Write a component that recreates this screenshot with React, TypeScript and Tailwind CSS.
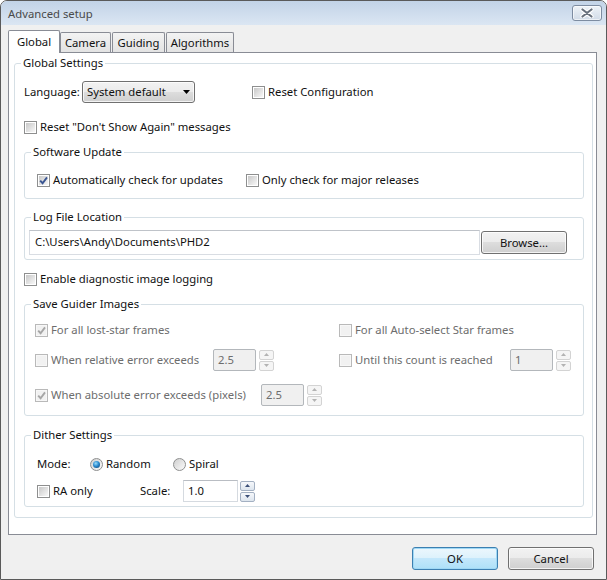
import React from "react";

type ChildrenProps = { children?: React.ReactNode; className?: string };

function Check({ checked = false, disabled = false }: { checked?: boolean; disabled?: boolean }) {
  return (
    <span
      className={`relative flex h-[13px] w-[13px] shrink-0 items-center justify-center border ${
        disabled ? "border-[#b9b9b9] bg-[#f7f7f7]" : "border-[#8e8f8f] bg-white"
      }`}
    >
      <span
        className={`h-[9px] w-[9px] ${
          disabled ? "bg-[#f1f1f1]" : "bg-[linear-gradient(135deg,#c8c8c8,#f8f8f8)]"
        }`}
      />
      {checked && (
        <svg className="absolute left-[1px] top-[1px]" width="9" height="9" viewBox="0 0 9 9">
          <path
            d="M1.2 4.6 L3.6 7.2 L8 1.4"
            fill="none"
            stroke={disabled ? "#a6a6a6" : "#3a5693"}
            strokeWidth="1.9"
          />
        </svg>
      )}
    </span>
  );
}

function Radio({ selected = false }: { selected?: boolean }) {
  return (
    <span className="flex h-[13px] w-[13px] shrink-0 items-center justify-center rounded-full border border-[#8e8f8f] bg-[linear-gradient(135deg,#cfcfcf,#fbfbfb)]">
      {selected && (
        <span className="h-[7px] w-[7px] rounded-full bg-[radial-gradient(circle_at_40%_35%,#9adcf9_0%,#2b8bd0_45%,#0c3a66_100%)]" />
      )}
    </span>
  );
}

function CheckLabel({
  children,
  checked,
  disabled,
  className = "",
}: ChildrenProps & { checked?: boolean; disabled?: boolean }) {
  return (
    <div className={`flex items-center ${className}`}>
      <Check checked={checked} disabled={disabled} />
      <span className={`ml-[3px] whitespace-nowrap pb-[2px] ${disabled ? "text-[#6d6d6d]" : ""}`}>{children}</span>
    </div>
  );
}

function Spin({ disabled = false }: { disabled?: boolean }) {
  const box = disabled
    ? "border-[#d3d3d3] bg-[#f5f5f5]"
    : "border-[#a3b0c2] bg-[linear-gradient(#f6f8fb,#dde5ee)]";
  const fill = disabled ? "#b3b3b3" : "#3b4f78";
  return (
    <div className="flex w-[15px] shrink-0 flex-col gap-[1px]">
      <span className={`flex h-[10px] items-center justify-center rounded-[2px] border ${box}`}>
        <svg width="5" height="3" viewBox="0 0 5 3">
          <path d="M0 3 L2.5 0 L5 3Z" fill={fill} />
        </svg>
      </span>
      <span className={`flex h-[10px] items-center justify-center rounded-[2px] border ${box}`}>
        <svg width="5" height="3" viewBox="0 0 5 3">
          <path d="M0 0 L5 0 L2.5 3Z" fill={fill} />
        </svg>
      </span>
    </div>
  );
}

function Field({
  children,
  disabled = false,
  className = "",
}: ChildrenProps & { disabled?: boolean }) {
  return (
    <div
      className={`flex h-[22px] shrink-0 items-center border pb-[2px] pl-[4px] ${
        disabled
          ? "rounded-[2px] border-[#b3b7bb] bg-[#f0f0f0] text-[#6d6d6d]"
          : "border-[#d5dae0] border-t-[#b9bdc3] bg-white"
      } ${className}`}
    >
      {children}
    </div>
  );
}

function PushButton({ children, primary = false, className = "" }: ChildrenProps & { primary?: boolean }) {
  return (
    <div
      className={`flex h-[23px] w-[86px] items-center justify-center rounded-[3px] border pb-[1px] ${
        primary
          ? "border-[#3c7fb1] bg-[linear-gradient(#ecf7fd_0%,#dcf1fc_50%,#c3e7fb_50%,#ade0f8_100%)] shadow-[inset_0_0_0_1px_#9fd8f5]"
          : "border-[#707070] bg-[linear-gradient(#f2f2f2_0%,#ebebeb_50%,#dddddd_50%,#cfcfcf_100%)] shadow-[inset_0_0_0_1px_rgba(255,255,255,0.75)]"
      } ${className}`}
    >
      {children}
    </div>
  );
}

function Group({ title, children, className = "" }: ChildrenProps & { title: string }) {
  return (
    <fieldset className={`rounded-[3px] border border-[#d5dfe5] ${className}`}>
      <legend className="ml-[6px] px-[2px] pb-[2px] leading-[13px]">{title}</legend>
      {children}
    </fieldset>
  );
}

function Tab({ children, className = "" }: ChildrenProps) {
  return (
    <div
      className={`flex h-[20px] items-center justify-center rounded-t-[2px] border border-b-0 border-[#898c95] bg-[linear-gradient(#f3f3f3,#e3e3e3)] pb-[1px] ${className}`}
    >
      {children}
    </div>
  );
}

export default function App() {
  return (
    <div className="flex h-[580px] w-[607px] flex-col overflow-hidden rounded-t-[7px] border border-[#5a5a5a] bg-[#f0f0f0] font-['Noto_Sans',sans-serif] text-[11.3px] leading-[15px] text-[#111]">
      {/* caption bar */}
      <div className="flex h-[24px] shrink-0 items-start justify-between bg-[linear-gradient(#c2d3e7,#dbe6f3)] pl-[7px] pr-[4px]">
        <span className="mt-[5px] text-[#4a4a4a]">Advanced setup</span>
        <div className="mt-[4px] flex h-[16px] w-[30px] items-center justify-center rounded-[3px] border border-[#7d8ca1] bg-[linear-gradient(#eef3f8,#d1dbe7)] shadow-[inset_0_0_0_1px_rgba(255,255,255,0.6)]">
          <svg width="14" height="10" viewBox="0 0 14 10">
            <path d="M2.5 1.5 L11.5 8.5 M11.5 1.5 L2.5 8.5" stroke="#ffffff" strokeWidth="4.2" strokeLinecap="round" />
            <path d="M2.5 1.5 L11.5 8.5 M11.5 1.5 L2.5 8.5" stroke="#68717d" strokeWidth="2.2" strokeLinecap="round" />
          </svg>
        </div>
      </div>

      <div className="flex flex-col px-[7px] pt-[5px]">
        {/* tab strip */}
        <div className="flex h-[22px] items-end">
          <div className="relative z-10 -mb-px flex h-[23px] w-[52px] items-center justify-center rounded-t-[2px] border border-b-0 border-[#898c95] bg-white pb-[2px]">
            Global
          </div>
          <Tab className="w-[51px]">Camera</Tab>
          <Tab className="ml-[1px] w-[53px]">Guiding</Tab>
          <Tab className="ml-[1px] w-[68px]">Algorithms</Tab>
        </div>

        {/* tab page */}
        <div className="h-[483px] w-[589px] border border-[#898c95] bg-white pl-[5px] pt-[3px]">
          <Group title="Global Settings" className="w-[579px] pb-[10px]">
            <div className="pl-[9px]">
              <div className="mt-[10px] flex h-[22px] items-center">
                <span className="w-[58px] pb-[2px]">Language:</span>
                <div className="flex h-[22px] w-[113px] items-center justify-between rounded-[3px] border border-[#707070] bg-[linear-gradient(#f2f2f2_0%,#ebebeb_50%,#dddddd_50%,#cfcfcf_100%)] pl-[4px] pr-[4px] shadow-[inset_0_0_0_1px_rgba(255,255,255,0.75)]">
                  <span className="pb-[2px]">System default</span>
                  <svg width="7" height="4" viewBox="0 0 7 4">
                    <path d="M0 0 L7 0 L3.5 4Z" fill="#000" />
                  </svg>
                </div>
                <CheckLabel className="ml-[57px]">Reset Configuration</CheckLabel>
              </div>

              <CheckLabel className="mt-[18px] h-[13px]">Reset "Don't Show Again" messages</CheckLabel>

              <Group title="Software Update" className="mt-[11px] w-[560px] pb-[11px]">
                <div className="mt-[14px] flex h-[13px] items-center pl-[12px]">
                  <CheckLabel checked className="w-[209px]">
                    Automatically check for updates
                  </CheckLabel>
                  <CheckLabel>Only check for major releases</CheckLabel>
                </div>
              </Group>

              <Group title="Log File Location" className="mt-[11px] w-[560px] pb-[4px]">
                <div className="mt-[5px] flex h-[25px] items-center pl-[4px]">
                  <div className="flex h-[25px] w-[451px] items-center border border-[#d9dde3] border-t-[#bfc3c9] bg-white pb-[2px] pl-[5px]">
                    C:\Users\Andy\Documents\PHD2
                  </div>
                  <PushButton className="ml-[1px]">Browse...</PushButton>
                </div>
              </Group>

              <CheckLabel className="mt-[13px] h-[13px]">Enable diagnostic image logging</CheckLabel>

              <Group title="Save Guider Images" className="mt-[11px] w-[560px] pb-[9px]">
                <div className="pl-[10px]">
                  <div className="mt-[12px] flex h-[13px] items-center">
                    <CheckLabel checked disabled className="w-[304px]">
                      For all lost-star frames
                    </CheckLabel>
                    <CheckLabel disabled>For all Auto-select Star frames</CheckLabel>
                  </div>
                  <div className="mt-[12px] flex h-[22px] items-center">
                    <div className="flex w-[304px] items-center">
                      <CheckLabel disabled className="w-[178px]">
                        When relative error exceeds
                      </CheckLabel>
                      <Field disabled className="w-[43px]">
                        2.5
                      </Field>
                      <div className="ml-[3px]">
                        <Spin disabled />
                      </div>
                    </div>
                    <CheckLabel disabled className="w-[171px]">
                      Until this count is reached
                    </CheckLabel>
                    <Field disabled className="w-[43px]">
                      1
                    </Field>
                    <div className="ml-[3px]">
                      <Spin disabled />
                    </div>
                  </div>
                  <div className="mt-[13px] flex h-[22px] items-center">
                    <CheckLabel checked disabled className="w-[226px]">
                      When absolute error exceeds (pixels)
                    </CheckLabel>
                    <Field disabled className="w-[43px]">
                      2.5
                    </Field>
                    <div className="ml-[3px]">
                      <Spin disabled />
                    </div>
                  </div>
                </div>
              </Group>

              <Group title="Dither Settings" className="mt-[12px] w-[560px] pb-[4px]">
                <div className="pl-[12px]">
                  <div className="mt-[13px] flex h-[16px] items-center">
                    <span className="w-[53px] pb-[2px]">Mode:</span>
                    <div className="flex w-[83px] items-center">
                      <Radio selected />
                      <span className="ml-[3px] pb-[2px]">Random</span>
                    </div>
                    <div className="flex items-center">
                      <Radio />
                      <span className="ml-[3px] pb-[2px]">Spiral</span>
                    </div>
                  </div>
                  <div className="mt-[8px] flex h-[22px] items-center">
                    <CheckLabel className="w-[103px]">RA only</CheckLabel>
                    <span className="w-[43px] pb-[2px]">Scale:</span>
                    <Field className="w-[55px]">1.0</Field>
                    <div className="ml-[2px]">
                      <Spin />
                    </div>
                  </div>
                </div>
              </Group>
            </div>
          </Group>
        </div>

        {/* dialog buttons */}
        <div className="mt-[12px] flex justify-end gap-[10px] pr-[5px]">
          <PushButton primary>OK</PushButton>
          <PushButton>Cancel</PushButton>
        </div>
      </div>
    </div>
  );
}
